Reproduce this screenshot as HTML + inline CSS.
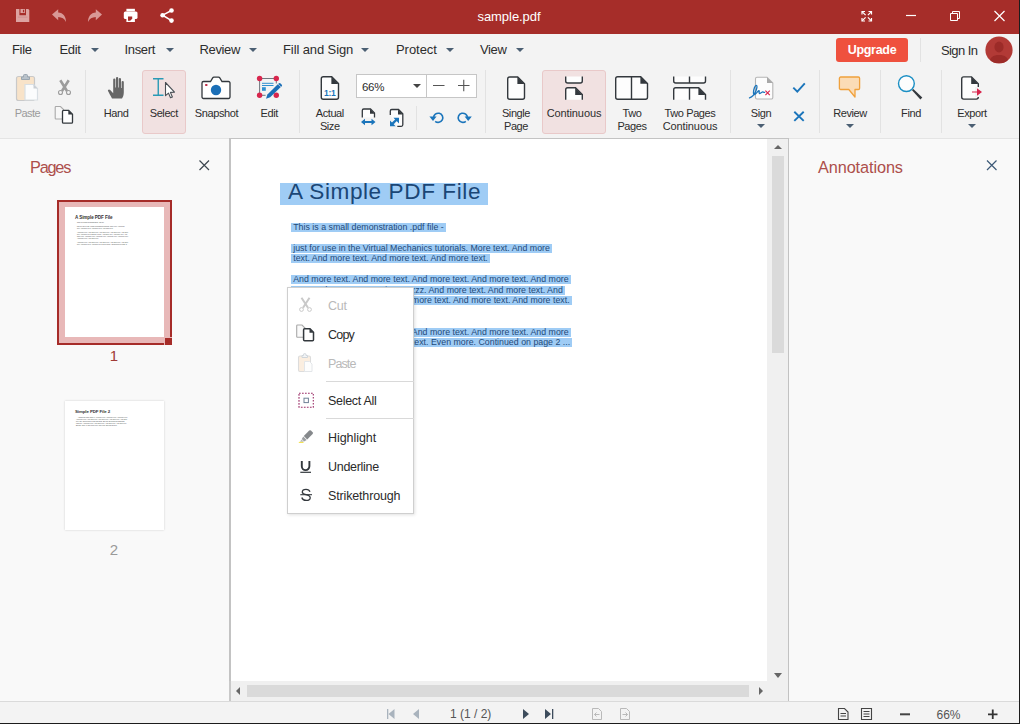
<!DOCTYPE html>
<html lang="en">
<head>
<meta charset="utf-8">
<title>sample.pdf</title>
<style>
*{box-sizing:border-box;margin:0;padding:0}
html,body{width:1020px;height:724px;overflow:hidden;background:#f9f9f9}
body{font-family:"Liberation Sans",sans-serif;color:#2b2b2b;position:relative}
.abs{position:absolute}
svg{position:absolute;overflow:visible;z-index:2}
/* title bar */
#title{position:absolute;left:0;top:0;width:1020px;height:34px;background:#a62d29}
#title .name{position:absolute;left:409px;width:200px;top:8px;text-align:center;color:#fff;font-size:13px;line-height:18px;letter-spacing:-0.050px}
/* menu bar */
#menu{position:absolute;left:0;top:33px;width:1020px;height:33px;background:#f3f3f3;border-top:1px solid #a62d29}
.mi{position:absolute;top:7px;font-size:13px;line-height:17px;color:#2d2d2d;white-space:nowrap;letter-spacing:-0.35px}
.arr{position:absolute;width:0;height:0;border-left:4px solid transparent;border-right:4px solid transparent;border-top:4px solid #4b5f73}
#upg{position:absolute;left:836px;top:4px;width:72px;height:24px;background:#ef513e;border-radius:3px;color:#fff;font-weight:bold;font-size:12.500px;line-height:24px;text-align:center;letter-spacing:-0.300px}
/* toolbar */
#tool{position:absolute;left:0;top:66px;width:1020px;height:72px;background:#f3f3f3}
.sep{position:absolute;width:1px;background:#e2e2e2}
.lb{position:absolute;font-size:11px;line-height:13px;color:#2d2d2d;white-space:nowrap;text-align:center;transform:translateX(-50%);letter-spacing:-0.4px}
.lb.dis{color:#9b9b9b}
.hl{position:absolute;background:#f1e1e1;border:1px solid #e9c9c9;border-radius:3px}
/* panels */
#left{position:absolute;left:0;top:138px;width:229px;height:563px;background:#f9f9f9;box-shadow:inset 0 1px 0 #e4e4e4}
#right{position:absolute;left:789px;top:138px;width:231px;height:563px;background:#f9f9f9;box-shadow:inset 0 1px 0 #e4e4e4}
.ph{position:absolute;font-size:16.300px;color:#ad4f4b;line-height:20px;letter-spacing:-0.100px}
#doc{position:absolute;left:229px;top:138px;width:538px;height:543px;background:#fff;border-left:2px solid #c3c3c3;border-top:1px solid #c3c3c3}
#vs{position:absolute;left:767px;top:138px;width:22px;height:563px;background:#f0f0f0;border-top:1px solid #c3c3c3;border-right:1px solid #c2c2c2}
#hs{position:absolute;left:229px;top:681px;width:538px;height:20px;background:#f0f0f0;border-left:2px solid #c9c9c9}
#status{position:absolute;left:0;top:701px;width:1020px;height:23px;background:#f3f3f3;border-top:1px solid #dadada;border-bottom:1px solid #1c1c1c}
.st{position:absolute;font-size:12px;color:#555;line-height:14px;white-space:nowrap}
.tt{white-space:nowrap;line-height:6px;letter-spacing:-0.100px}
.tx{font-size:1.600px;line-height:2px;height:2px;white-space:nowrap;color:#444;letter-spacing:.02px}
.pn{width:20px;text-align:center;font-size:15px;line-height:16px}
.tri{width:0;height:0}
/* document text */
.sel{position:absolute;background:#9fccf5}
.dt{position:absolute;white-space:nowrap;color:#1f4a78;font-size:8.800px;line-height:10px}
.dt span{background:#9fccf5;display:inline-block;height:9px;line-height:9px;padding:0 2px;margin-left:-2px;letter-spacing:.01px}
/* context menu */
#ctx{position:absolute;left:287px;top:287px;width:127px;height:227px;background:#fff;border:1px solid #cfcfcf;box-shadow:1px 1px 3px rgba(0,0,0,.12)}
.ci{position:absolute;left:40px;font-size:12.500px;line-height:16px;color:#2b2b2b;white-space:nowrap;letter-spacing:-0.300px}
.ci.dis{color:#b9b9b9}
.cs{position:absolute;left:38px;width:88px;height:1px;background:#d9d9d9}
</style>
</head>
<body>
<div id="title">
  <div class="name">sample.pdf</div>
  <svg width="1020" height="33" viewBox="0 0 1020 33" style="left:0;top:0">
    <!-- save (disabled) -->
    <g fill="#dda3a1">
      <path d="M16 9h3.4v6.2h6.6V9h2.2l1.1 1.1V22H16z"/>
      <path d="M20.5 9h4.4v4h-4.4zM22.9 9.8v2.4h1.2V9.8z" fill-rule="evenodd"/>
      <rect x="17.8" y="16.6" width="9.7" height="1" fill="#d08f8d"/>
    </g>
    <!-- undo / redo (disabled) -->
    <path d="M52 14.6L58.2 9.2v3.2c5 .2 7.8 4 7.8 9.6-1.6-3.4-4-4.8-7.8-5v3.2z" fill="#d99896"/>
    <path d="M102 14.6L95.8 9.2v3.2c-5 .2-7.800 4-7.800 9.600 1.600-3.400 4-4.800 7.800-5v3.200z" fill="#d99896"/>
    <!-- print -->
    <g fill="#fff">
      <rect x="126.400" y="8.800" width="8.500" height="2.600"/>
      <rect x="123.800" y="11.400" width="13.700" height="7.700" rx="1.600"/>
      <rect x="126.400" y="16" width="8.500" height="6"/>
      <path d="M128 16.400h4.200v2.300l-2 2h-2.200z" fill="#a62d29"/>
    </g>
    <!-- share -->
    <g fill="#fff" stroke="#fff">
      <path d="M171.500 10.500L162.600 15.200L171.500 20.600" fill="none" stroke-width="1.500"/>
      <circle cx="171.500" cy="10.500" r="2.300" stroke="none"/>
      <circle cx="162.600" cy="15.200" r="2.300" stroke="none"/>
      <circle cx="171.500" cy="20.600" r="2.300" stroke="none"/>
    </g>
    <!-- window controls -->
    <g fill="none" stroke="#fff" stroke-width="1.200">
      <path d="M862 14.500V11.500h3M868.500 11.500h3v3M871.500 18v3h-3M865 21h-3v-3"/>
      <path d="M862.300 11.800l3.300 3.300M871.200 11.800l-3.300 3.300M871.200 20.700l-3.300-3.300M862.300 20.700l3.300-3.300"/>
      <path d="M906 15.500h10"/>
      <path d="M950.500 13.500h7v7h-7zM952.500 13.500v-2h7v7h-2" stroke-width="1"/>
      <path d="M994.500 11l10 10M1004.500 11l-10 10"/>
    </g>
  </svg>

</div>
<div id="menu">
  <div class="mi" style="left:12px">File</div>
  <div class="mi" style="left:59.500px">Edit</div><div class="arr" style="left:91px;top:14px"></div>
  <div class="mi" style="left:124.500px">Insert</div><div class="arr" style="left:166px;top:14px"></div>
  <div class="mi" style="left:199.500px">Review</div><div class="arr" style="left:249px;top:14px"></div>
  <div class="mi" style="left:283px;letter-spacing:-0.100px">Fill and Sign</div><div class="arr" style="left:361px;top:14px"></div>
  <div class="mi" style="left:396px;letter-spacing:-0.050px">Protect</div><div class="arr" style="left:446px;top:14px"></div>
  <div class="mi" style="left:480px">View</div><div class="arr" style="left:516px;top:14px"></div>
  <div id="upg">Upgrade</div>
  <div class="sep" style="left:920px;top:4px;height:24px"></div>
  <div class="mi" style="left:941px;top:8px;letter-spacing:-0.600px">Sign In</div>
  <svg width="28" height="28" viewBox="0 0 28 28" style="left:985px;top:2px">
    <defs><clipPath id="avc"><circle cx="14" cy="14" r="13.600"/></clipPath></defs>
    <circle cx="14" cy="14" r="13.600" fill="#b23a36"/>
    <g clip-path="url(#avc)" fill="#9c2b28">
      <ellipse cx="14" cy="11" rx="4.600" ry="5.400"/>
      <path d="M4.500 27c0-5.500 3.500-8 9.500-8s9.500 2.500 9.500 8z"/>
    </g>
  </svg>
</div>
<div id="tool">
  <svg width="1020" height="138" viewBox="0 0 1020 138" style="left:0;top:-66px">
    <!-- paste (disabled) -->
    <g>
      <rect x="16.500" y="76.500" width="18" height="24" rx="2" fill="#f8e3c9" stroke="#c9c9c9" stroke-width="1.200"/>
      <path d="M21.500 79.500v-2.500h2v-1.500a1 1 0 0 1 1-1h2a1 1 0 0 1 1 1v1.500h2v2.500z" fill="#b9c2ca" stroke="#9aa6b0" stroke-width="1"/>
      <path d="M25 84.500h8.500l4 4v11.500h-12.500z" fill="#fbfcfd" stroke="#d9dfe4" stroke-width="1.200"/>
      <path d="M33.500 84.500v4h4z" fill="#c9ced3"/>
    </g>
    <!-- cut (disabled) -->
    <g fill="none" stroke="#9c9c9c">
      <path d="M60.300 80.300l6.700 10.700M68.700 80.300l-6.700 10.700" stroke-width="2.600"/>
      <circle cx="60.500" cy="92.500" r="2" stroke-width="1.100"/>
      <circle cx="68.500" cy="92.500" r="2" stroke-width="1.100"/>
    </g>
    <!-- copy -->
    <path d="M56 106.500h4.500l3 3v9.500h-7.500a.8.8 0 0 1-.800-.800v-10.900a.8.8 0 0 1 .8-.8z" fill="#f7f7f7" stroke="#a9a9a9" stroke-width="1.100"/>
    <path d="M63.500 110.400h5.200l3.800 3.800v8a1 1 0 0 1-1 1h-8a1 1 0 0 1-1-1v-10.800a1 1 0 0 1 1-1z" fill="#fff" stroke="#33383d" stroke-width="1.300"/>
    <path d="M68.300 110.400v4.200h4.200z" fill="#33383d"/>
    <!-- hand -->
    <g fill="#666">
      <path d="M112 98.500c-1.500-3-3-5.500-4-7.500-.5-1.200 1-2.300 2.200-1l3 3.200V79.500a1.100 1.100 0 0 1 2.200 0v8h.600v-9.400a1.100 1.100 0 0 1 2.200 0v9.400h.600v-8.400a1.100 1.100 0 0 1 2.200 0v8.900h.6v-6a1.100 1.100 0 0 1 2.200 0v10.500c0 2.500-.8 4.500-1.800 6z"/>
    </g>
    <!-- select -->
    <g fill="none" stroke="#2a9ab5" stroke-width="1.400">
      <path d="M153 78.700h10.500M153 95.300h10.500M158.250 78.700v16.600"/>
    </g>
    <path d="M165.500 82.500v13.200l3-2.600 2 4.700 1.900-.8-2-4.600 4.100-.3z" fill="#fff" stroke="#4a4f55" stroke-width="1.100" stroke-linejoin="round"/>
    <!-- snapshot -->
    <path d="M203.500 81.500h7l2.200-3.600a1.500 1.500 0 0 1 1.300-.700h4.500a1.500 1.500 0 0 1 1.300.7l2.200 3.600h6.500a1.500 1.500 0 0 1 1.500 1.500v14a1.500 1.500 0 0 1-1.500 1.500h-25a1.500 1.500 0 0 1-1.500-1.500v-14a1.500 1.500 0 0 1 1.500-1.500z" fill="#fff" stroke="#33383d" stroke-width="1.300"/>
    <circle cx="216" cy="90" r="5.200" fill="#1b6fb7"/>
    <rect x="205.200" y="84" width="2.200" height="2" fill="#c0304a"/>
    <!-- edit -->
    <g>
      <path d="M259.600 78.500h16.700M259.600 78.500v16.800M276.300 78.500v5M259.600 95.300h6" fill="none" stroke="#6f767d" stroke-width="1"/>
      <path d="M262 83.300h11.500M262 85.500h11.500" stroke="#2f8fd0" stroke-width="1"/>
      <rect x="262" y="87.200" width="3.800" height="3.600" fill="#2f8fd0"/>
      <circle cx="259.600" cy="78.500" r="2.700" fill="#d8264d"/>
      <circle cx="276.300" cy="78.500" r="2.700" fill="#d8264d"/>
      <circle cx="259.600" cy="95.300" r="2.700" fill="#d8264d"/>
      <circle cx="276.300" cy="95.300" r="2.700" fill="#d8264d"/>
      <path d="M277.800 84.300l3 2.800-10.600 10.200-4.200 1.500 1.400-4.200z" fill="#1b6fb7"/>
      <path d="M278.600 83.500a1.400 1.400 0 0 1 2-.1l1 1a1.400 1.400 0 0 1 0 2l-.4.400-3-2.900z" fill="#1b6fb7"/>
    </g>
    <!-- actual size -->
    <path d="M323.300 76.800h8.400l6.800 6.800v13.700a2 2 0 0 1-2 2h-13.200a2 2 0 0 1-2-2v-18.500a2 2 0 0 1 2-2z" fill="#fdfdfd" stroke="#33383d" stroke-width="1.400"/>
    <path d="M331.400 76.800l7.100 7.100h-7.100z" fill="#33383d"/>
    <text x="329.800" y="96.300" style="font-family:'Liberation Sans',sans-serif" font-weight="bold" font-size="8.500" fill="#1b75bb" text-anchor="middle" letter-spacing="-0.200">1:1</text>
    <!-- zoom -/+ -->
    <path d="M433 85.500h11.500M458 85.500h11.500M463.750 79.800v11.500" stroke="#555" stroke-width="1.100" fill="none"/>
    <!-- fit width -->
    <path d="M362.300 117.500v-7a1.500 1.500 0 0 1 1.500-1.500h6.700l4 4v4.500" fill="#fdfdfd" stroke="#33383d" stroke-width="1.300"/>
    <path d="M370 109l4.700 4.700h-4.700z" fill="#33383d"/>
    <path d="M361 122l4-3.300v2.400h6.500v-2.400l4 3.300-4 3.300v-2.400h-6.500v2.400z" fill="#1b75bb"/>
    <!-- fit page -->
    <path d="M390.300 115v-4a1.500 1.500 0 0 1 1.500-1.500h6.700l4.300 4.300v11a1.500 1.500 0 0 1-1.500 1.500h-4" fill="#fdfdfd" stroke="#33383d" stroke-width="1.300"/>
    <path d="M398 109.500l5 5h-5z" fill="#33383d"/>
    <path d="M390 126.200v-5.600l5.600 5.600zM399 117.800v5.600l-5.600-5.600z" fill="#1b75bb"/><path d="M392.300 123.900l4.400-4.400" stroke="#1b75bb" stroke-width="2.400"/>
    <!-- rotate ccw -->
    <g fill="none" stroke="#1b75bb" stroke-width="1.600">
      <path d="M433.600 117.800A4.600 4.600 0 1 1 435.200 121.300"/>
      <path d="M467.400 117.800A4.600 4.600 0 1 0 465.800 121.300"/>
    </g>
    <path d="M429.400 116.500h7.200l-3.600 4.600z" fill="#1b75bb"/>
    <path d="M471.800 116.500h-7.200l3.600 4.600z" fill="#1b75bb"/>
    <!-- single page -->
    <path d="M509.700 77h8l6.800 6.800v13.400a2 2 0 0 1-2 2h-12.800a2 2 0 0 1-2-2v-18.200a2 2 0 0 1 2-2z" fill="#fdfdfd" stroke="#33383d" stroke-width="1.400"/>
    <path d="M517.400 77l7.100 7.100h-7.100z" fill="#33383d"/>
    <!-- continuous -->
    <path d="M565.700 76.500v4.500a2 2 0 0 0 2 2h12.600a2 2 0 0 0 2-2v-4.500z" fill="#fdfdfd" stroke="none"/>
    <path d="M565.700 76.500v4.500a2 2 0 0 0 2 2h12.600a2 2 0 0 0 2-2v-4.500" fill="none" stroke="#33383d" stroke-width="1.400"/>
    <path d="M565.700 99.800v-10a2 2 0 0 1 2-2h7.800l6.800 6.800v5.200z" fill="#fdfdfd"/>
    <path d="M565.700 99.800v-10a2 2 0 0 1 2-2h7.800l6.800 6.800v5.200" fill="none" stroke="#33383d" stroke-width="1.400"/>
    <path d="M575.200 87.800l7.100 7.100h-7.100z" fill="#33383d"/>
    <!-- two pages -->
    <path d="M617.700 76.700h23l6.800 6.800v13.700a2 2 0 0 1-2 2h-27.800a2 2 0 0 1-2-2v-18.500a2 2 0 0 1 2-2z" fill="#fdfdfd" stroke="#33383d" stroke-width="1.400"/>
    <path d="M631.500 76.700v22.500" stroke="#33383d" stroke-width="1.400"/>
    <path d="M640.400 76.700l7.100 7.100h-7.100z" fill="#33383d"/>
    <!-- two pages continuous -->
    <path d="M673.700 76.500v4.500a2 2 0 0 0 2 2h27.800a2 2 0 0 0 2-2v-4.500z" fill="#fdfdfd"/>
    <path d="M673.700 76.500v4.500a2 2 0 0 0 2 2h27.800a2 2 0 0 0 2-2v-4.500M689.500 76.500v6.500" fill="none" stroke="#33383d" stroke-width="1.400"/>
    <path d="M673.700 99.800v-10a2 2 0 0 1 2-2h23l6.800 6.800v5.200z" fill="#fdfdfd"/>
    <path d="M673.700 99.800v-10a2 2 0 0 1 2-2h23l6.800 6.800v5.200M689.500 87.800v12" fill="none" stroke="#33383d" stroke-width="1.400"/>
    <path d="M698.400 87.800l7.100 7.100h-7.100z" fill="#33383d"/>
    <!-- sign -->
    <path d="M757 77.200h10l5.800 5.800v14.500a1.500 1.500 0 0 1-1.500 1.500h-14.300a1.500 1.500 0 0 1-1.500-1.500v-18.800a1.500 1.500 0 0 1 1.500-1.500z" fill="#fdfdfd" stroke="#b5b5b5" stroke-width="1.100"/>
    <path d="M767 77.200l5.800 5.800h-5.800z" fill="#a9a9a9"/>
    <path d="M749.500 97.800c2.500-.6 5.200-3.600 6.600-7.200 1-2.600 1.200-5.200.2-5.300-1.300-.1-2.600 3.800-2.800 7-.1 1.800.5 2.600 1.400 2.200 1-.5 2.200-2.200 3.200-3.400.7-.8 1.300-.5 1.100.5-.2 1-.2 2 .6 1.900.9-.1 1.600-1.200 2.600-1.500.8-.2 1.200.5 2.200.4" fill="none" stroke="#1b75bb" stroke-width="1.300" stroke-linecap="round"/>
    <path d="M765.400 90.700l4.400 4.400M769.800 90.700l-4.400 4.400" stroke="#d8264d" stroke-width="1.200"/>
    <!-- check / x -->
    <path d="M793.300 87.600l4 4 7.500-8.200" fill="none" stroke="#1b75bb" stroke-width="1.900"/>
    <path d="M794.300 111.700l9.400 9.200M803.700 111.700l-9.400 9.200" fill="none" stroke="#1b75bb" stroke-width="1.900"/>
    <!-- review -->
    <path d="M840.700 77h17.600a1.300 1.300 0 0 1 1.300 1.300v9.900a1.300 1.300 0 0 1-1.300 1.300h-3.300v7.500l-6.200-7.500h-8.100a1.300 1.300 0 0 1-1.300-1.300v-9.900a1.300 1.300 0 0 1 1.300-1.300z" fill="#fbdcb6" stroke="#f0a13c" stroke-width="1.300" stroke-linejoin="round"/>
    <!-- find -->
    <circle cx="906.400" cy="83.600" r="7.900" fill="#fdfdfd" stroke="#1b8fc4" stroke-width="1.400"/>
    <path d="M912 90.300l1.300-1.300 9 8.600-1.900 2z" fill="#33383d"/>
    <!-- export -->
    <path d="M963.700 76.900h7.800l6.800 6.800v13.400a2 2 0 0 1-2 2h-12.600a2 2 0 0 1-2-2v-18.200a2 2 0 0 1 2-2z" fill="#fdfdfd" stroke="#33383d" stroke-width="1.400"/>
    <path d="M971.200 76.900l7.100 7.100h-7.100z" fill="#33383d"/>
    <rect x="975" y="87" width="5" height="10" fill="#f3f3f3"/>
    <path d="M972 91.400h5v-3.100l5 3.700-5 3.700v-3.100h-5z" fill="#d8264d"/>
  </svg>

  <div class="hl" style="left:142px;top:4px;width:44px;height:64px"></div>
  <div class="hl" style="left:542px;top:4px;width:64px;height:64px"></div>
  <div class="sep" style="left:85px;top:4px;height:63px"></div>
  <div class="sep" style="left:299px;top:4px;height:63px"></div>
  <div class="sep" style="left:416px;top:40px;height:24px"></div>
  <div class="sep" style="left:485px;top:4px;height:63px"></div>
  <div class="sep" style="left:730px;top:4px;height:63px"></div>
  <div class="sep" style="left:819px;top:4px;height:63px"></div>
  <div class="sep" style="left:880px;top:4px;height:63px"></div>
  <div class="sep" style="left:941px;top:4px;height:63px"></div>
  <div class="lb dis" style="left:27.4px;top:41px;letter-spacing:-0.600px">Paste</div>
  <div class="lb" style="left:116px;top:41px">Hand</div>
  <div class="lb" style="left:163.800px;top:41px">Select</div>
  <div class="lb" style="left:216.500px;top:41px">Snapshot</div>
  <div class="lb" style="left:269.300px;top:41px">Edit</div>
  <div class="lb" style="left:329.800px;top:41px">Actual<br>Size</div>
  <div class="lb" style="left:516px;top:41px">Single<br>Page</div>
  <div class="lb" style="left:574px;top:41px;letter-spacing:-0.100px">Continuous</div>
  <div class="lb" style="left:632px;top:41px">Two<br>Pages</div>
  <div class="lb" style="left:690px;top:41px">Two Pages<br><span style="letter-spacing:-0.100px">Continuous</span></div>
  <div class="lb" style="left:761px;top:41px">Sign</div>
  <div class="lb" style="left:850px;top:41px">Review</div>
  <div class="lb" style="left:911px;top:41px">Find</div>
  <div class="lb" style="left:972px;top:41px">Export</div>
  <div class="arr" style="left:757px;top:58px"></div>
  <div class="arr" style="left:846px;top:58px"></div>
  <div class="arr" style="left:968px;top:58px"></div>
  <div class="abs" style="left:356px;top:8px;width:121px;height:24px;background:#fff;border:1px solid #c6c6c6"></div>
  <div class="abs" style="left:426px;top:8px;width:1px;height:24px;background:#c6c6c6"></div>
  <div class="abs" style="left:362px;top:13.500px;font-size:11.500px;line-height:15px;color:#2d2d2d;letter-spacing:-0.300px">66%</div>
  <div class="arr" style="left:413px;top:18px;border-top-color:#444"></div>
</div>
<div id="left">
  <div class="ph" style="left:30px;top:19px;letter-spacing:-1.200px">Pages</div>
  <svg width="229" height="563" viewBox="0 138 229 563" style="left:0;top:0">
    <path d="M199.500 160.500l9.500 9.500M209 160.500l-9.500 9.500" stroke="#3d4750" stroke-width="1.200" fill="none"/>
  </svg>
  <div class="abs" style="left:57px;top:62px;width:115px;height:145px;background:#e8b8b8;border:2px solid #a62c29"></div>
  <div class="abs" style="left:65px;top:69px;width:99px;height:130px;background:#fff"></div>
  <div class="abs" style="left:164px;top:199px;width:8px;height:8px;background:#a62c29;border:1px solid #e8b8b8;border-right:0;border-bottom:0"></div>
  <div class="abs tt" style="left:75px;top:77px;font-size:4.600px;font-weight:bold;color:#333">A Simple PDF File</div>
  <div class="abs tx" style="left:77px;top:84px">This is a small demonstration .pdf file -</div>
  <div class="abs tx" style="left:77px;top:88px">just for use in the Virtual Mechanics tutorials. More text. And more</div>
  <div class="abs tx" style="left:77px;top:90px">text. And more text. And more text. And more text.</div>
  <div class="abs tx" style="left:77px;top:94px">And more text. And more text. And more text. And more text. And more</div>
  <div class="abs tx" style="left:77px;top:96px">text. And more text. Boring, zzzzz. And more text. And more text. And</div>
  <div class="abs tx" style="left:77px;top:98px">more text. And more text. And more text. And more text. And more text.</div>
  <div class="abs tx" style="left:77px;top:100px">And more text. And more text.</div>
  <div class="abs tx" style="left:77px;top:104px">And more text. And more text. And more text. And more text. And more</div>
  <div class="abs tx" style="left:77px;top:106px">text. And more text. And more text. Even more. Continued on page 2 ...</div>
  <div class="abs pn" style="left:104px;top:210px;color:#a03a36">1</div>
  <div class="abs" style="left:65px;top:263px;width:99px;height:129px;background:#fff;box-shadow:0 0 2px rgba(0,0,0,.18)"></div>
  <div class="abs tt" style="left:75px;top:271px;font-size:4.400px;font-weight:bold;color:#333">Simple PDF File 2</div>
  <div class="abs tx" style="left:77px;top:279px">...continued from page 1. Yet more text. And more text. And more text.</div>
  <div class="abs tx" style="left:76px;top:281px">And more text. And more text. And more text. And more text. And more</div>
  <div class="abs tx" style="left:76px;top:283px">text. Oh, how boring typing this stuff. But not as boring as watching</div>
  <div class="abs tx" style="left:76px;top:285px">paint dry. And more text. And more text. And more text. And more text.</div>
  <div class="abs tx" style="left:76px;top:287px">Boring.  More, a little more text. The end, and just as well.</div>
  <div class="abs pn" style="left:104px;top:404px;color:#9a9a9a">2</div>
</div>
<div id="doc">
  <div class="sel" style="left:49.4px;top:44px;width:207.2px;height:22px"></div>
  <div class="abs" style="left:56.600px;top:41.2px;font-size:21.300px;line-height:24px;letter-spacing:.55px;transform:scaleX(1.06);transform-origin:0 0;color:#1a4676;white-space:nowrap">A Simple PDF File</div>
  <div class="dt" style="left:62.200px;top:83px"><span>This is a small demonstration .pdf file -</span></div>
  <div class="dt" style="left:62.200px;top:103.9px"><span>just for use in the Virtual Mechanics tutorials. More text. And more</span></div>
  <div class="dt" style="left:62.200px;top:114.3px"><span>text. And more text. And more text. And more text.</span></div>
  <div class="dt" style="left:62.200px;top:135.2px"><span>And more text. And more text. And more text. And more text. And more</span></div>
  <div class="dt" style="left:62.200px;top:145.6px"><span>text. And more text. Boring, zzzzz. And more text. And more text. And</span></div>
  <div class="dt" style="left:62.200px;top:156px"><span>more text. And more text. And more text. And more text. And more text.</span></div>
  <div class="dt" style="left:62.200px;top:166.4px"><span>And more text. And more text.</span></div>
  <div class="dt" style="left:62.200px;top:187.7px"><span>And more text. And more text. And more text. And more text. And more</span></div>
  <div class="dt" style="left:62.200px;top:198.2px"><span>text. And more text. And more text. Even more. Continued on page 2 ...</span></div>
</div>
<div id="vs">
  <div class="abs" style="left:5px;top:17px;width:12px;height:197px;background:#dadada"></div>
  <div class="abs tri" style="left:7px;top:6px;border-bottom:4px solid #666;border-left:4px solid transparent;border-right:4px solid transparent"></div>
  <div class="abs tri" style="left:7px;top:534px;border-top:5px solid #666;border-left:4px solid transparent;border-right:4px solid transparent"></div>
</div>
<div id="hs">
  <div class="abs" style="left:16px;top:4px;width:502px;height:12px;background:#dadada"></div>
  <div class="abs tri" style="left:5px;top:6px;border-right:4px solid #666;border-top:4px solid transparent;border-bottom:4px solid transparent"></div>
  <div class="abs tri" style="left:528px;top:6px;border-left:4px solid #666;border-top:4px solid transparent;border-bottom:4px solid transparent"></div>
</div>
<div id="right">
  <div class="ph" style="left:29px;top:19px">Annotations</div>
  <svg width="231" height="563" viewBox="789 138 231 563" style="left:0;top:0">
    <path d="M987 160.500l9.500 9.500M996.500 160.500l-9.500 9.500" stroke="#3d5a78" stroke-width="1.200" fill="none"/>
  </svg>
</div>
<div id="status">
  <div class="st" style="left:450px;top:5px">1 (1 / 2)</div>
  <div class="st" style="left:936.500px;top:6px">66%</div>
  <svg width="1020" height="23" viewBox="0 701 1020 23" style="left:0;top:-1px">
    <g fill="#a9b3bd">
      <path d="M387 709h1.300v10h-1.300zM394.500 709v10l-6-5z"/>
      <path d="M419 709v10l-6-5z"/>
    </g>
    <g fill="#3d4c5c">
      <path d="M523 709v10l6-5z"/>
      <path d="M545 709v10l6-5zM552 709h1.300v10h-1.300z"/>
    </g>
    <g fill="none" stroke="#b9b9b9" stroke-width="1">
      <path d="M592.500 708.500h6l3 3v8h-9z"/>
      <path d="M599.500 714.500h-5M596.500 712.500l-2 2 2 2"/>
      <path d="M620.500 708.500h6l3 3v8h-9z"/>
      <path d="M622.500 714.500h5M625.500 712.500l2 2-2 2"/>
    </g>
    <g fill="none" stroke="#444" stroke-width="1.100">
      <path d="M838.500 708.500h6l3.500 3.500v7.500h-9.500z"/>
      <path d="M840.500 713.500h5.500M840.500 716h5.500"/>
      <path d="M861.500 708.500h10v11h-10z"/>
      <path d="M863.500 711.500h6M863.500 714h6M863.500 716.500h6"/>
    </g>
    <path d="M900 714.300h10" stroke="#444" stroke-width="2"/>
    <path d="M988 714.300h9.500M992.750 709.500v9.500" stroke="#333" stroke-width="1.800"/>
  </svg>
</div>
<div id="ctx">
  <div class="ci dis" style="top:10px">Cut</div>
  <div class="ci" style="top:39px;letter-spacing:-0.800px">Copy</div>
  <div class="ci dis" style="top:68px;letter-spacing:-0.900px">Paste</div>
  <div class="cs" style="top:93px"></div>
  <div class="ci" style="top:105px">Select All</div>
  <div class="cs" style="top:130px"></div>
  <div class="ci" style="top:142px;letter-spacing:-0.050px">Highlight</div>
  <div class="ci" style="top:171px">Underline</div>
  <div class="ci" style="top:200px;letter-spacing:-0.150px">Strikethrough</div>
  <svg width="127" height="227" viewBox="288 288 127 227" style="left:0;top:0">
    <!-- cut -->
    <g fill="none" stroke="#c9c9c9">
      <path d="M301.500 297.800l6.500 10M309.500 297.800l-6.500 10" stroke-width="2"/>
      <circle cx="301.500" cy="309.500" r="1.900" stroke-width="1"/>
      <circle cx="309.500" cy="309.500" r="1.900" stroke-width="1"/>
    </g>
    <!-- copy -->
    <path d="M297.500 325h4.500l3 3v9.300h-7.500a.8.8 0 0 1-.800-.800v-10.700a.8.8 0 0 1 .8-.8z" fill="#fafafa" stroke="#a9a9a9" stroke-width="1.100"/>
    <path d="M304.600 328.700h5.400l3.500 3.500v7.500a1 1 0 0 1-1 1h-7.900a1 1 0 0 1-1-1v-10a1 1 0 0 1 1-1z" fill="#fff" stroke="#33383d" stroke-width="1.500"/>
    <path d="M309.500 328.700v4h4z" fill="#33383d"/>
    <!-- paste -->
    <rect x="298.500" y="356" width="12" height="15.500" rx="1.500" fill="#fbeee0" stroke="#dcdcdc" stroke-width="1.100"/>
    <path d="M302 357.500v-2h1.500v-1a.8.8 0 0 1 .8-.8h.900a.8.8 0 0 1 .8.800v1h1.500v2z" fill="#f2f4f6" stroke="#cfd5da" stroke-width="1"/>
    <path d="M304.500 361.500h5l2.500 2.500v7.500h-7.500z" fill="#fdfdfd" stroke="#e3e6e9" stroke-width="1"/>
    <!-- select all -->
    <rect x="299" y="393.200" width="14.300" height="14" fill="none" stroke="#9c2f68" stroke-width="1.100" stroke-dasharray="1.700 1.300"/>
    <rect x="304" y="398.200" width="4.400" height="4.400" fill="#fff" stroke="#6f8196" stroke-width="1"/>
    <!-- highlight -->
    <path d="M303.800 436l5.400-5.400a1.300 1.300 0 0 1 1.800 0l1.600 1.600a1.300 1.300 0 0 1 0 1.800l-5.400 5.400z" fill="#85888b"/>
    <path d="M303.300 436.500l3.400 3.400-2.600 1.500-2.300-2.300z" fill="#9c9fa2"/>
    <path d="M301.500 439.400l2.400 2.400h-3.900z" fill="#b5b7b9"/>
    <path d="M298.800 442.400h4.700" stroke="#f3e24f" stroke-width="1.100"/>
    <!-- underline -->
    <path d="M301.800 461v5.300a3.800 3.800 0 0 0 7.600 0v-5.300" fill="none" stroke="#33383d" stroke-width="1.900"/>
    <path d="M300.300 472.300h10.700" stroke="#33383d" stroke-width="1.200"/>
    <!-- strikethrough -->
    <path d="M310 491.800c-.5-1.600-2-2.500-4-2.500-2.200 0-3.700 1-3.700 2.700 0 1.500 1.200 2.200 3.700 2.700 2.800.6 4.200 1.300 4.200 3 0 1.600-1.600 2.700-4 2.700-2.300 0-3.900-1-4.400-2.900" fill="none" stroke="#33383d" stroke-width="1.300"/>
    <path d="M300.300 494.700h11.700" stroke="#33383d" stroke-width="1.100"/>
  </svg>
</div>
<div class="abs" style="left:1019px;top:0;width:1px;height:724px;background:#1c1c1c;z-index:5"></div>
</body>
</html>
